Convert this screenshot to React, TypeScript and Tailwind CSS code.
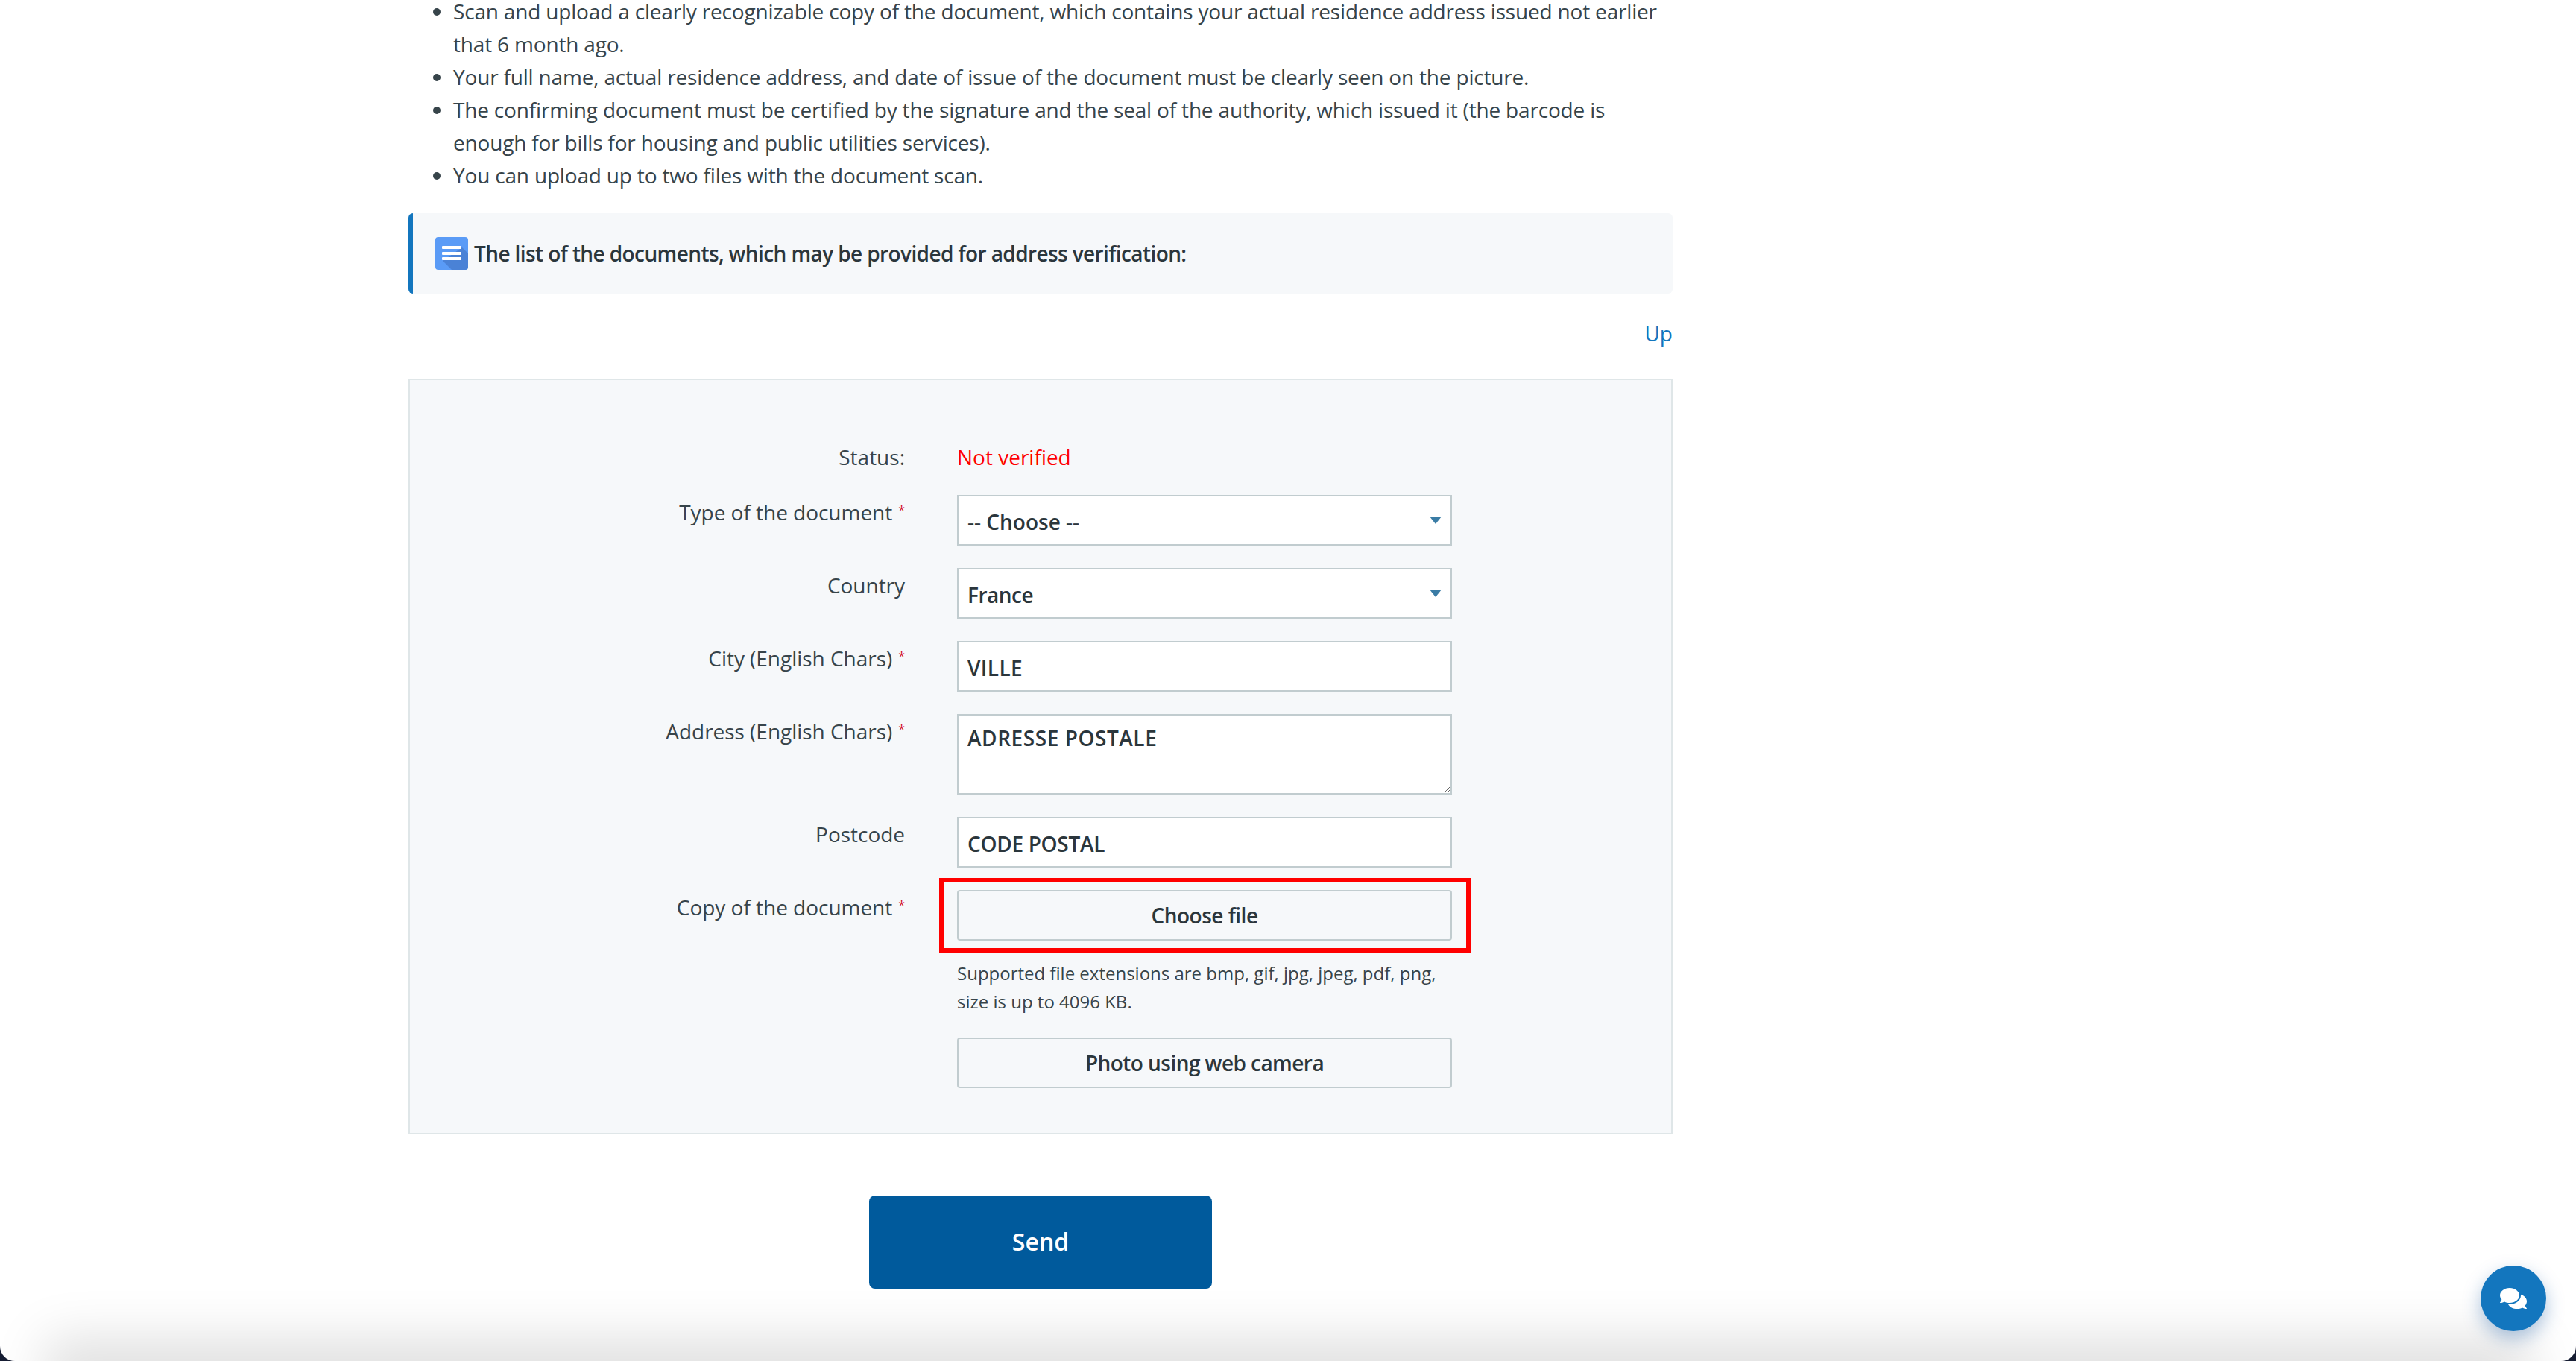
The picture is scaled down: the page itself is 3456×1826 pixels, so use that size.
import { FaComments } from "react-icons/fa";

const fieldClass =
  "block w-full h-[68px] bg-white border-2 border-[#c1cccf] px-3 pt-[3px] text-[28px] font-semibold text-[#2b363c] outline-none";

const Label = ({ text, required }: { text: string; required?: boolean }) => (
  <div className="w-[664px] shrink-0 pt-[1px] text-right text-[28px] leading-[44px] tracking-[-0.03px] text-[#37444a]">
    {text}
    {required && <sup className="ml-[8px] text-[16px] leading-none text-[#d0021b]">*</sup>}
  </div>
);

const Arrow = () => (
  <svg className="absolute right-[14px] top-[29px] pointer-events-none" width="16" height="10" viewBox="0 0 16 10">
    <path d="M0 0h16L8 10z" fill="#3a7ca5" />
  </svg>
);

const DocIcon = () => (
  <svg width="44" height="44" viewBox="0 0 44 44" className="shrink-0">
    <rect width="44" height="44" rx="4" fill="#5a9bf6" />
    <path d="M10 32 L36 14 L44 22 V40 a4 4 0 0 1 -4 4 H22 z" fill="#4a82d6" />
    <rect x="9" y="12" width="26" height="4" rx="1" fill="#fff" />
    <rect x="9" y="20" width="26" height="4" rx="1" fill="#fff" />
    <rect x="9" y="27" width="26" height="4" rx="1" fill="#fff" />
  </svg>
);

const App = () => {
  return (
    <div className="relative h-[1826px] overflow-hidden bg-[#161d33] font-['Open_Sans',sans-serif] text-[#2b363c]">
      <div className="relative h-full overflow-hidden rounded-b-[20px] bg-white">
        <div className="ml-[548px] w-[1696px] -mt-[7px]">
          <ul className="list-disc pl-[60px] text-[28px] leading-[44px] tracking-[-0.18px] text-[#37444a]">
            <li>
              Scan and upload a clearly recognizable copy of the document, which contains your actual residence address
              issued not earlier that 6 month ago.
            </li>
            <li>Your full name, actual residence address, and date of issue of the document must be clearly seen on the picture.</li>
            <li>
              The confirming document must be certified by the signature and the seal of the authority, which issued it
              (the barcode is enough for bills for housing and public utilities services).
            </li>
            <li>You can upload up to two files with the document scan.</li>
          </ul>

          {/* Notice */}
          <div className="mt-[29px] flex h-[108px] items-center gap-2 rounded-[6px] border-l-[6px] border-[#1376be] bg-[#f6f8fa] pl-[30px]">
            <DocIcon />
            <span className="text-[28px] font-semibold tracking-[-0.6px] text-[#2b363c]">
              The list of the documents, which may be provided for address verification:
            </span>
          </div>

          <div className="mt-[31px] text-right text-[28px] leading-[44px] text-[#1376be]">Up</div>

          {/* Form */}
          <div className="mt-[39px] border-2 border-[#dfe6e8] bg-[#f6f8fa] pt-[81px] pb-[60px] text-[28px]">
            <div className="mb-[29px] flex gap-[70px]">
              <div className="w-[664px] shrink-0 text-right leading-[44px] text-[#37444a]">Status:</div>
              <div className="leading-[44px] text-[#ff0000]">Not verified</div>
            </div>

            <div className="mb-[30px] flex gap-[70px]">
              <Label text="Type of the document" required />
              <div className="relative w-[664px]">
                <select defaultValue="" className={`${fieldClass} appearance-none tracking-[0px]`}>
                  <option value="">-- Choose --</option>
                </select>
                <Arrow />
              </div>
            </div>

            <div className="mb-[30px] flex gap-[70px]">
              <Label text="Country" />
              <div className="relative w-[664px]">
                <select defaultValue="France" className={`${fieldClass} appearance-none tracking-[-0.5px]`}>
                  <option>France</option>
                </select>
                <Arrow />
              </div>
            </div>

            <div className="mb-[30px] flex gap-[70px]">
              <Label text="City (English Chars)" required />
              <div className="w-[664px]">
                <input type="text" defaultValue="VILLE" className={`${fieldClass} tracking-[0.4px]`} />
              </div>
            </div>

            <div className="mb-[30px] flex gap-[70px]">
              <Label text="Address (English Chars)" required />
              <div className="w-[664px]">
                <textarea
                  defaultValue="ADRESSE POSTALE"
                  className="block h-[108px] w-full border-2 border-[#c1cccf] bg-white px-3 pt-[8px] text-[28px] font-semibold leading-[44px] tracking-[0.55px] text-[#2b363c] outline-none"
                />
              </div>
            </div>

            <div className="mb-[30px] flex gap-[70px]">
              <Label text="Postcode" />
              <div className="w-[664px]">
                <input type="text" defaultValue="CODE POSTAL" className={`${fieldClass} tracking-[-0.3px]`} />
              </div>
            </div>

            <div className="flex gap-[70px]">
              <Label text="Copy of the document" required />
              <div className="w-[664px]">
                <div className="relative">
                  <button className="block h-[68px] w-full rounded-[4px] border-2 border-[#c1cccf] bg-[#f6f8fa] text-[28px] font-semibold tracking-[-0.5px] text-[#2b363c]">
                    Choose file
                  </button>
                  <div className="absolute -left-[24px] -right-[25px] -top-[16px] -bottom-[16px] border-[6px] border-[#ff0000] pointer-events-none" />
                </div>
                <p className="mt-[25px] text-[24px] leading-[38px] text-[#37444a]">
                  Supported file extensions are bmp, gif, jpg, jpeg, pdf, png, size is up to 4096 KB.
                </p>
                <button className="mt-[29px] block h-[68px] w-full rounded-[4px] border-2 border-[#c1cccf] bg-[#f6f8fa] text-[28px] font-semibold tracking-[-0.55px] text-[#2b363c]">
                  Photo using web camera
                </button>
              </div>
            </div>
          </div>

          <div className="mt-[82px] flex justify-center">
            <button className="h-[125px] w-[460px] rounded-[8px] bg-[#005a9c] pb-[2px] text-[32px] font-semibold text-white">Send</button>
          </div>
        </div>

        {/* Shadow at the window's bottom edge */}
        <div className="absolute -bottom-[30px] left-[90px] right-[90px] h-[30px] shadow-[0_0_70px_30px_rgba(0,0,0,0.13)]" />

        {/* Chat */}
        <button className="absolute left-[3328px] top-[1698px] flex h-[88px] w-[88px] items-center justify-center rounded-full bg-[#1376be] shadow-[0_10px_24px_rgba(19,85,160,0.35)]">
          <FaComments size={36} color="#ffffff" />
        </button>
      </div>
    </div>
  );
};

export default App;
